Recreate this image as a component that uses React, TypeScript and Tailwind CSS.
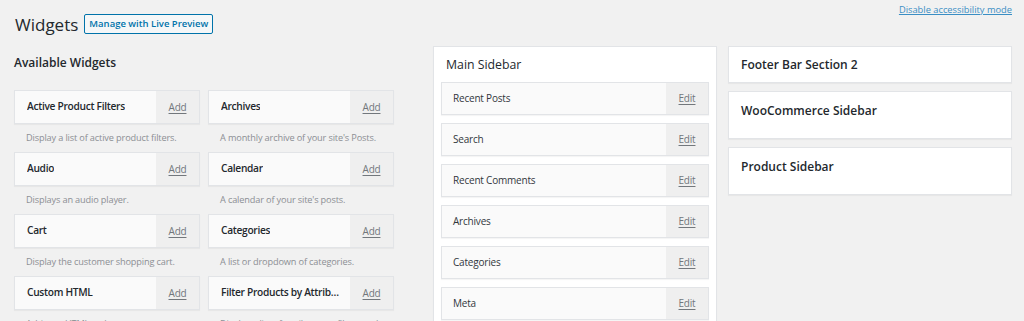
import React from 'react';

const available = [
  { name: 'Active Product Filters', desc: 'Display a list of active product filters.' },
  { name: 'Archives', desc: "A monthly archive of your site's Posts." },
  { name: 'Audio', desc: 'Displays an audio player.' },
  { name: 'Calendar', desc: "A calendar of your site's posts." },
  { name: 'Cart', desc: 'Display the customer shopping cart.' },
  { name: 'Categories', desc: 'A list or dropdown of categories.' },
  { name: 'Custom HTML', desc: 'Arbitrary HTML code.' },
  { name: 'Filter Products by Attribute', desc: 'Display a list of attributes to filter products.' },
];

const mainSidebar = ['Recent Posts', 'Search', 'Recent Comments', 'Archives', 'Categories', 'Meta'];

function AvailableWidget({ name, desc }: { name: string; desc: string }) {
  return (
    <div className="flex flex-col min-w-0">
      <div className="flex h-[34px] bg-[#fafafa] border border-[#e2e4e7] shadow-[0_1px_1px_rgba(0,0,0,0.04)]">
        <div className="flex-1 min-w-0 flex items-center pl-[12px] pr-[6px] text-[10.2px] tracking-[-0.3px] font-semibold text-[#23282d]">
          <span className="truncate">{name}</span>
        </div>
        <div className="w-[43px] shrink-0 bg-[#efefef] flex items-center justify-center text-[10px] tracking-[-0.2px] text-[#72777c] underline underline-offset-2">
          Add
        </div>
      </div>
      <div className="h-[28px] flex items-center pl-[12px] text-[9.2px] tracking-[-0.15px] text-[#8c8f94] whitespace-nowrap overflow-hidden">{desc}</div>
    </div>
  );
}

export default function App() {
  return (
    <div className="w-full h-[321px] overflow-hidden bg-[#f1f1f1] font-['Open_Sans',sans-serif] text-[#23282d]">
      {/* Header */}
      <div className="flex items-start justify-between h-[46px] pl-[15px] pr-[12px]">
        <div className="flex items-center gap-[6px] pt-[14px]">
          <h1 className="text-[17px] leading-none text-[#23282d]">Widgets</h1>
          <button className="h-[20px] px-[4px] border border-[#0073aa] bg-[#f5f7f8] text-[#0073aa] text-[9.5px] font-semibold rounded-[2px] leading-none">
            Manage with Live Preview
          </button>
        </div>
        <a className="pt-[3px] text-[9.3px] text-[#3a8ec4] underline">Disable accessibility mode</a>
      </div>

      {/* Columns */}
      <div className="flex pl-[14px] pr-[12px]">
        {/* Available widgets */}
        <div className="w-[380px] shrink-0">
          <h2 className="text-[12px] font-semibold text-[#23282d] pt-[8px] h-[44px]">Available Widgets</h2>
          <div className="grid grid-cols-2 gap-x-[8px]">
            {available.map((w) => (
              <AvailableWidget key={w.name} name={w.name} desc={w.desc} />
            ))}
          </div>
        </div>

        {/* Main sidebar */}
        <div className="ml-[39px] w-[284px] shrink-0 bg-white border border-[#e2e4e7] shadow-[0_1px_1px_rgba(0,0,0,0.04)] px-[7px] pb-[8px]">
          <h2 className="text-[12.3px] text-[#23282d] h-[35px] flex items-center pl-[5px] pt-[2px]">Main Sidebar</h2>
          <div className="flex flex-col gap-[8px]">
            {mainSidebar.map((name) => (
              <div key={name} className="flex h-[33px] bg-[#fafafa] border border-[#e2e4e7] shadow-[0_1px_1px_rgba(0,0,0,0.04)]">
                <div className="flex-1 flex items-center pl-[11px] text-[10px] tracking-[-0.2px] text-[#32373c]">{name}</div>
                <div className="w-[42px] bg-[#efefef] flex items-center justify-center text-[10px] tracking-[-0.2px] text-[#72777c] underline underline-offset-2">
                  Edit
                </div>
              </div>
            ))}
          </div>
        </div>

        {/* Other sidebars */}
        <div className="ml-[11px] flex-1 flex flex-col gap-[8px]">
          <div className="h-[37px] bg-white border border-[#e2e4e7] shadow-[0_1px_1px_rgba(0,0,0,0.04)] pl-[12px] pt-[9px] text-[12px] font-semibold text-[#23282d]">
            Footer Bar Section 2
          </div>
          <div className="h-[48px] bg-white border border-[#e2e4e7] shadow-[0_1px_1px_rgba(0,0,0,0.04)] pl-[12px] pt-[10px] text-[12px] font-semibold text-[#23282d]">
            WooCommerce Sidebar
          </div>
          <div className="h-[48px] bg-white border border-[#e2e4e7] shadow-[0_1px_1px_rgba(0,0,0,0.04)] pl-[12px] pt-[10px] text-[12px] font-semibold text-[#23282d]">
            Product Sidebar
          </div>
        </div>
      </div>
    </div>
  );
}
